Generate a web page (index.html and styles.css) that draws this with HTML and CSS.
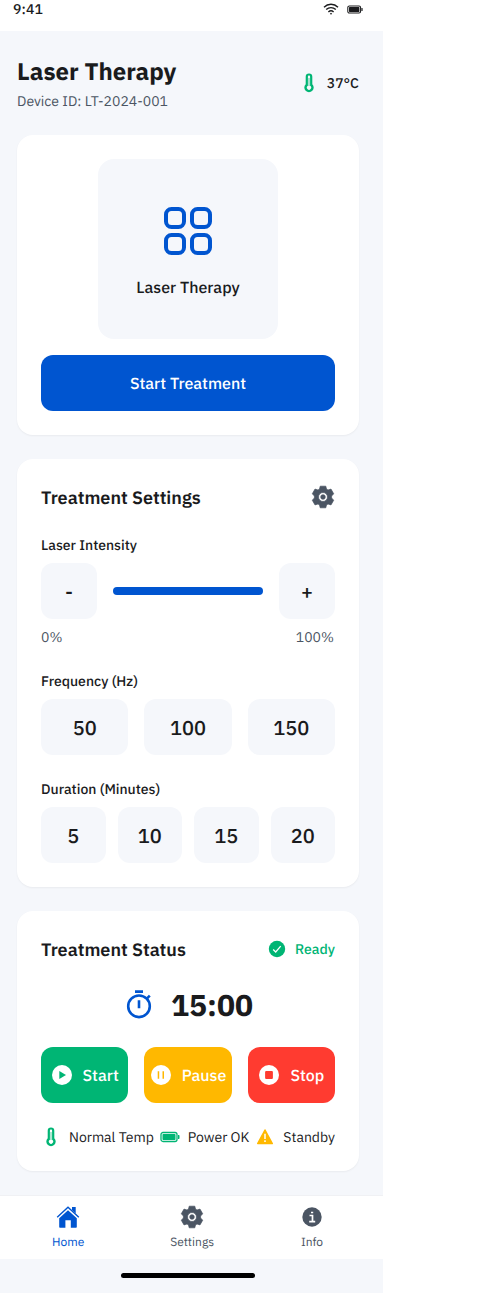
FILE: index.html
```
<!DOCTYPE html>
<html lang="en">
<head>
<meta charset="utf-8">
<title>Laser Therapy</title>
<link rel="stylesheet" href="styles.css">
</head>
<body>
<svg class="defs" aria-hidden="true">
  <symbol id="gear" viewBox="0 0 24 24"><path fill-rule="evenodd" d="M9.2 1.2h5.6l.7 2.9 1.5.9 3-.9 2.7 4.7-2.1 2.2v2l2.1 2.2-2.7 4.700-3-.9-1.5.9-.7 2.9H9.2L8.500 19.900 7 19l-3 .9-2.700-4.700L3.400 13v-2L1.300 8.800 4 4.100l3 .9 1.500-.9zM12 7.500a4.500 4.500 0 1 0 0 9 4.500 4.500 0 0 0 0-9zm0 2.200a2.300 2.300 0 1 1 0 4.600 2.300 2.300 0 0 1 0-4.600z" stroke="currentColor" stroke-width=".7" stroke-linejoin="round"/></symbol>
  <symbol id="thermo" viewBox="0 0 20 20"><path fill-rule="evenodd" d="M6.700 3.700a3.300 3.300 0 0 1 6.600 0v7.500a4.700 4.700 0 1 1-6.600 0zM10 2.500c-.7 0-1.100.4-1.100 1.200v9.100a2.100 2.100 0 1 0 2.200 0V3.700c0-.8-.4-1.200-1.100-1.200z"/><path d="M9.200 5h1.600v8H9.200z" opacity=".4"/></symbol>
  <symbol id="battery" viewBox="0 0 20 12"><rect x="1" y="1.500" width="16" height="9" rx="2" fill="none" stroke="currentColor" stroke-width="1.300"/><rect x="2.500" y="3" width="13" height="6" rx=".7"/><path d="M18 4h.7q.8 0 .8.800v2.400q0 .8-.8.800H18z"/></symbol>
</svg>
<div class="app">
  <div class="statusbar">
    <span class="clock">9:41</span>
    <span class="status-icons">
      <svg class="wifi outline" viewBox="0 0 16 12" stroke-width="1.400"><path d="M1 4.200C5 .3 11 .3 15 4.200M3.200 6.600c2.800-2.700 6.800-2.700 9.600 0M5.400 8.900c1.600-1.500 3.600-1.500 5.200 0"/><circle cx="8" cy="10.700" r=".5" fill="currentColor" stroke-width=".8"/></svg>
      <svg class="phone-battery"><use href="#battery"/></svg>
    </span>
  </div>
  <main class="content">
    <header class="page-header">
      <div>
        <h1>Laser Therapy</h1>
        <p class="device">Device ID: LT-2024-001</p>
      </div>
      <div class="temp"><svg class="icon20 green"><use href="#thermo"/></svg><span>37°C</span></div>
    </header>

    <section class="card hero">
      <div class="mode">
        <svg class="grid-icon outline" viewBox="0 0 48 48" stroke-width="4"><rect x="2" y="2" width="18" height="18" rx="5.500"/><rect x="28" y="2" width="18" height="18" rx="5.500"/><rect x="2" y="28" width="18" height="18" rx="5.500"/><rect x="28" y="28" width="18" height="18" rx="5.500"/></svg>
        <span class="mode-name">Laser Therapy</span>
      </div>
      <button class="primary">Start Treatment</button>
    </section>

    <section class="card">
      <div class="card-head"><h2>Treatment Settings</h2><svg class="icon24 gray"><use href="#gear"/></svg></div>
      <div class="field">
        <h3>Laser Intensity</h3>
        <div class="slider-row"><button class="tile step">-</button><div class="track"></div><button class="tile step">+</button></div>
        <div class="range"><span>0%</span><span>100%</span></div>
      </div>
      <div class="field">
        <h3>Frequency (Hz)</h3>
        <div class="tiles three"><button class="tile">50</button><button class="tile">100</button><button class="tile">150</button></div>
      </div>
      <div class="field">
        <h3>Duration (Minutes)</h3>
        <div class="tiles four"><button class="tile">5</button><button class="tile">10</button><button class="tile">15</button><button class="tile">20</button></div>
      </div>
    </section>

    <section class="card">
      <div class="card-head"><h2>Treatment Status</h2>
        <div class="ready"><svg class="icon20" viewBox="0 0 20 20"><circle cx="10" cy="10" r="8.200"/><path d="M6.200 10.500l2.500 2.500 5-5.800" fill="none" stroke="#fff" stroke-width="1.300"/></svg><span>Ready</span></div>
      </div>
      <div class="timer">
        <svg class="timer-icon outline" viewBox="0 0 32 32" stroke-width="2.600"><circle cx="16" cy="17.300" r="10.800"/><path d="M12 2.600h8M16 11.200v8M23.800 9.700l3-3"/></svg>
        <span>15:00</span>
      </div>
      <div class="tiles three">
        <button class="action start"><svg class="icon24" viewBox="0 0 24 24"><circle cx="12" cy="12" r="10"/><path class="cut" d="M9.300 8v8l6.700-4z"/></svg><span>Start</span></button>
        <button class="action pause"><svg class="icon24" viewBox="0 0 24 24"><circle cx="12" cy="12" r="10"/><path class="cut" d="M8.700 8.300h1.500v7.400H8.700zM13.500 8.300H15v7.400h-1.500z"/></svg><span>Pause</span></button>
        <button class="action stop"><svg class="icon24" viewBox="0 0 24 24"><circle cx="12" cy="12" r="10"/><rect class="cut" x="8.100" y="8.100" width="7.800" height="7.800" rx="1"/></svg><span>Stop</span></button>
      </div>
      <div class="checks">
        <div><svg class="icon20 green"><use href="#thermo"/></svg><span>Normal Temp</span></div>
        <div><svg class="icon20 green" viewBox="0 0 20 20"><use href="#battery" y="4" width="20" height="12"/></svg><span>Power OK</span></div>
        <div><svg class="icon20 amber" viewBox="0 0 20 20"><path d="M10 3l7.300 13.500H2.700z" stroke="currentColor" stroke-width="1.500" stroke-linejoin="round"/><path d="M10 6.800v5.100M10 13.300v1.800" stroke="#fff" stroke-width="1.500"/></svg><span>Standby</span></div>
      </div>
    </section>
  </main>
  <nav class="tabs">
    <a class="tab active"><svg class="icon24" viewBox="0 0 24 24"><path d="M12 5.300l8.800 8V22q0 .8-.8.800h-5.200v-7.600H9.400v7.600H4q-.8 0-.8-.8v-8.700zM16 2h3.700v6.500L16 5z"/><path d="M1.200 12.300L12 2.300l10.800 10" fill="none" stroke="currentColor" stroke-width="1.400"/></svg><span>Home</span></a>
    <a class="tab"><svg class="icon24"><use href="#gear"/></svg><span>Settings</span></a>
    <a class="tab"><svg class="icon24" viewBox="0 0 24 24"><circle cx="12" cy="12" r="9.700"/><path d="M9.500 10.500h3v6M9.200 16.600h6M11 7.500h2.200" fill="none" stroke="#fff" stroke-width="1.700"/></svg><span>Info</span></a>
  </nav>
  <div class="home-area"><div class="home-indicator"></div></div>
</div>
</body>
</html>
```
FILE: styles.css
```
* { box-sizing: border-box; }
body { margin: 0; background: #fff; color: #1a1b1d; font-family: "IBM Plex Sans", Roboto, "Liberation Sans", sans-serif; text-rendering: geometricPrecision; }
h1, h2, h3, p { margin: 0; }
button { font: inherit; color: inherit; border: 0; padding: 0; margin: 0; text-rendering: inherit; }
svg { fill: currentColor; flex: none; display: block; }
.outline { fill: none; stroke: currentColor; }
.defs { display: none; }
.app { width: 383px; background: #f5f7fb; }
.statusbar { height: 31px; padding: 0 20px 0 13px; background: #fff; display: flex; justify-content: space-between; align-items: flex-start; }
.clock { font-size: 14px; font-weight: 500; line-height: 18px; letter-spacing: .1px; }
.status-icons { display: flex; gap: 8px; padding-top: 3px; align-items: center; }
.wifi { width: 16px; height: 12px; }
.phone-battery { width: 16px; height: 11px; }
.content { padding: 24px 24px 24px 17px; display: flex; flex-direction: column; gap: 24px; }
.page-header { height: 56px; display: flex; justify-content: space-between; align-items: center; }
h1 { font-size: 24px; line-height: 32px; margin-bottom: 4px; font-weight: 700; }
.device { font-size: 14px; line-height: 20px; color: #4b5563; }
.temp { display: flex; gap: 8px; align-items: center; font-size: 14px; font-weight: 500; }
.icon20 { width: 20px; height: 20px; }
.icon24 { width: 24px; height: 24px; }
.green { color: #00b574; }
.gray { color: #4b5563; }
.amber { color: #ffb800; }
.card { padding: 24px; border-radius: 16px; background: #fff; box-shadow: 0 1px 2px rgba(0,0,0,.05); }
.hero { display: flex; flex-direction: column; align-items: center; gap: 16px; }
.mode { width: 180px; height: 180px; padding-top: 9px; border-radius: 16px; background: #f5f7fb; display: flex; flex-direction: column; align-items: center; justify-content: center; gap: 21px; }
.grid-icon { width: 48px; height: 48px; color: #0055d0; }
.mode-name { font-size: 16px; line-height: 24px; font-weight: 500; }
.primary { width: 100%; height: 56px; padding-top: 2px; background: #0055d0; color: #fff; border-radius: 12px; font-size: 16px; font-weight: 500; }
.card-head { height: 28px; margin-bottom: 24px; display: flex; align-items: center; justify-content: space-between; }
h2 { font-size: 18px; line-height: 28px; padding-top: 2px; font-weight: 600; }
.field + .field { margin-top: 24px; }
h3 { font-size: 14px; line-height: 20px; font-weight: 500; margin-bottom: 8px; }
.slider-row { display: flex; align-items: center; gap: 16px; }
.tile { height: 56px; border-radius: 12px; background: #f5f7fb; font-size: 20px; font-weight: 500; }
.step { width: 56px; flex: none; }
.track { flex: 1; height: 8px; border-radius: 4px; background: #0055d0; }
.range { margin-top: 8px; padding-right: 1px; display: flex; justify-content: space-between; font-size: 14px; line-height: 20px; color: #4b5563; }
.tiles { display: grid; }
.three { grid-template-columns: repeat(3, minmax(0, 1fr)); gap: 16px; }
.four { grid-template-columns: repeat(4, minmax(0, 1fr)); gap: 12px; }
.ready { display: flex; align-items: center; gap: 8px; color: #00b574; font-size: 14px; font-weight: 500; }
.timer { height: 36px; margin-bottom: 24px; display: flex; justify-content: center; align-items: center; gap: 16px; font-size: 30px; line-height: 36px; font-weight: 700; }
.timer span { padding-top: 2px; }
.timer-icon { width: 32px; height: 32px; color: #0055d0; }
.action { height: 56px; border-radius: 12px; color: #fff; font-size: 16px; font-weight: 500; display: flex; align-items: center; justify-content: center; gap: 8px; white-space: nowrap; }
.action span { padding-top: 2px; }
.start { background: #00b574; }
.pause { background: #ffb800; }
.stop { background: #ff3b30; }
.start .cut { fill: #00b574; }
.pause .cut { fill: #ffb800; }
.stop .cut { fill: #ff3b30; }
.action svg { margin-left: -1px; margin-right: 1px; }
.checks { margin-top: 24px; height: 20px; display: flex; justify-content: space-between; font-size: 14px; line-height: 20px; white-space: nowrap; }
.checks div { display: flex; gap: 8px; }
.tabs { height: 64px; background: #fff; border-top: 1px solid #f0f1f4; display: flex; justify-content: space-around; padding: 9px 16px 0 9px; }
.tab { display: flex; flex-direction: column; align-items: center; gap: 5px; font-size: 12px; line-height: 18px; color: #4b5563; }
.active { color: #0055d0; }
.home-area { height: 34px; display: flex; justify-content: center; padding: 14px 7px 0 0; }
.home-indicator { width: 134px; height: 5px; border-radius: 3px; background: #000; }
```
